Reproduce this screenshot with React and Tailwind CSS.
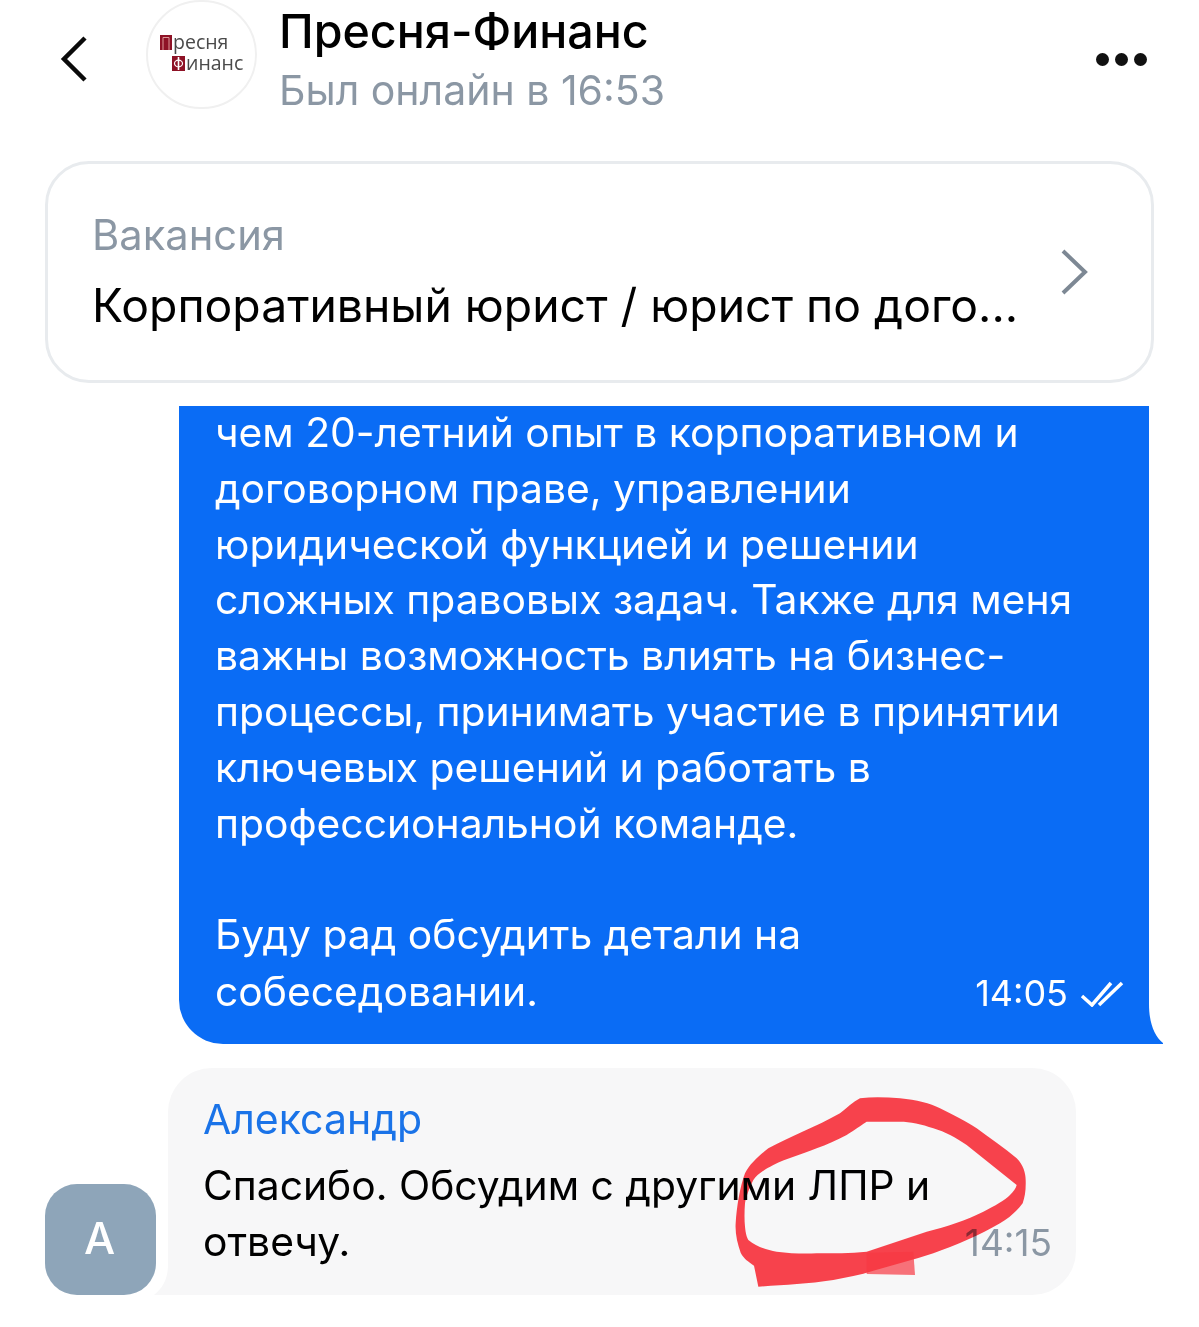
const font = { fontFamily: 'Inter, "Noto Sans", sans-serif' };

const blueLines = [
	'чем 20-летний опыт в корпоративном и',
	'договорном праве, управлении',
	'юридической функцией и решении',
	'сложных правовых задач. Также для меня',
	'важны возможность влиять на бизнес-',
	'процессы, принимать участие в принятии',
	'ключевых решений и работать в',
	'профессиональной команде.',
	'\u00a0',
	'Буду рад обсудить детали на',
];

// marker ring traced from the screenshot, in 3x crop coordinates
const ringOuter = 'M480 55 C520 50 560 52 600 55 C650 60 690 70 720 85 C760 105 800 125 830 145 C870 175 915 205 950 235 C970 255 977 280 977 300 C978 330 975 350 968 370 C950 395 925 415 900 430 C840 465 770 495 700 520 C640 540 580 555 520 572 C480 585 440 592 400 600 C320 612 250 615 175 620 L162 557 C145 545 130 535 122 518 C112 490 105 460 107 430 C110 380 120 320 135 280 C150 250 180 225 205 205 C270 170 350 140 420 100 C440 85 460 65 480 55 Z';
const ringInner = 'M500 125 C470 145 455 155 440 165 C410 180 380 195 350 205 C310 222 260 235 220 255 C190 270 170 285 160 300 C148 325 138 350 135 370 C133 395 133 420 135 440 C137 460 140 470 145 480 C170 500 200 510 230 515 C270 520 310 522 350 520 C400 520 450 520 500 515 C560 495 620 475 680 455 C740 440 800 420 850 395 C885 378 915 360 930 345 C940 335 948 325 950 315 C900 275 850 235 800 195 C770 175 735 155 700 145 C665 132 630 125 600 125 Z';

function BackIcon() {
	return (
		<svg width="30" height="48" viewBox="0 0 30 48" fill="none" stroke="#0a0a0a" strokeWidth="4.5">
			<path d="M25 3 L4 24 L25 45" />
		</svg>
	);
}

function Logo() {
	return (
		<div className="w-[111px] h-[109px] shrink-0 rounded-full border-2 border-[#f0f0f0] bg-white flex flex-col justify-center pl-[12px] pb-[4px] text-[#4a4a4a] text-[19.5px] leading-[20px] font-['Open_Sans',sans-serif]">
			<div className="flex items-center">
				<svg className="mr-px" width="12" height="15" viewBox="0 0 12 15">
					<rect width="12" height="15" fill="#8e1226" />
					<path d="M3 15 V2.5 H9 V15" fill="none" stroke="#d99" strokeWidth="1" />
				</svg>
				<span>ресня</span>
			</div>
			<div className="flex items-center pl-[12px] mt-[1px]">
				<svg className="mr-px" width="13" height="15" viewBox="0 0 13 15">
					<rect width="13" height="15" fill="#8e1226" />
					<ellipse cx="6.5" cy="7.5" rx="4" ry="3.4" fill="none" stroke="#fff" strokeWidth="1.2" />
					<path d="M6.5 1 V14" stroke="#fff" strokeWidth="1.6" />
				</svg>
				<span>инанс</span>
			</div>
		</div>
	);
}

export default function App() {
	return (
		<div className="w-[1199px] h-[1327px] bg-white overflow-hidden flex flex-col" style={font}>
			{/* Header */}
			<header className="h-[161px] shrink-0 flex items-start">
				<div className="w-[146px] pl-[60px] pt-[35px]"><BackIcon /></div>
				<Logo />
				<div className="ml-[22px] flex-1">
					<div className="text-[46.6px] leading-[62px] font-medium text-black">Пресня-Финанс</div>
					<div className="text-[41px] leading-[54px] text-[#8b97a4] mt-[1px]">Был онлайн в 16:53</div>
				</div>
				<div className="flex gap-[6px] pt-[53px] pr-[52px]">
					<span className="w-[13px] h-[13px] rounded-full bg-[#111]" />
					<span className="w-[13px] h-[13px] rounded-full bg-[#111]" />
					<span className="w-[13px] h-[13px] rounded-full bg-[#111]" />
				</div>
			</header>

			{/* Vacancy card */}
			<div className="mx-[45px] h-[222px] shrink-0 rounded-[44px] border-[3px] border-[#e8ebee] flex items-center pl-[44px] pr-[62px]">
				<div className="flex-1">
					<div className="text-[41.7px] leading-[54px] text-[#8b97a4] -mt-[1px]">Вакансия</div>
					<div className="text-[46.3px] leading-[60px] mt-[13px] text-black whitespace-nowrap">Корпоративный юрист / юрист по дого...</div>
				</div>
				<svg width="30" height="48" viewBox="0 0 30 48" fill="none" stroke="#7d8894" strokeWidth="4">
					<path d="M4 3 L26 24 L4 45" />
				</svg>
			</div>

			{/* Outgoing message */}
			<div className="relative ml-[179px] w-[970px] h-[638px] mt-[23px] shrink-0 bg-[#0a6cf5] rounded-bl-[44px] pl-[36px] text-white text-[40.8px] leading-[55.8px]">
				<div className="-mt-px">
					{blueLines.map((line, i) => (
						<div key={i} className="whitespace-nowrap">{line}</div>
					))}
					<div className="flex items-center justify-between pr-[25px]">
						<span>собеседовании.</span>
						<span className="flex items-center gap-[12px] text-[36px] pt-[3px]">
							14:05
							<svg width="44" height="26" viewBox="0 0 44 26" fill="none" stroke="white" strokeWidth="3.5">
								<path d="M2 15 L12 24 L31 2" />
								<path d="M19 24 L42 2" />
							</svg>
						</span>
					</div>
				</div>
				<svg className="absolute right-[-14px] bottom-0" width="14" height="40" viewBox="0 0 14 40">
					<path d="M0 0 C0 18 5 32 14 39 L14 40 L0 40 Z" fill="#0a6cf5" />
				</svg>
			</div>

			{/* Incoming message */}
			<div className="flex items-end mt-[24px] ml-[45px]">
				<div className="w-[111px] h-[111px] rounded-[32px] bg-[#8ea5b9] flex items-center justify-center text-white text-[44px] font-medium pb-[3px] pr-[2px]">А</div>
				<div className="relative ml-[12px] w-[908px] h-[227px] bg-[#f7f7f8] rounded-[44px] rounded-bl-none pl-[35px] pt-[23px]">
					<svg className="absolute left-[-14px] bottom-0" width="14" height="30" viewBox="0 0 14 30">
						<path d="M14 0 C14 12 10 22 0 30 L14 30 Z" fill="#f7f7f8" />
					</svg>
					<div className="text-[41px] leading-[56px] text-[#1a73e8]">Александр</div>
					<div className="text-[40.8px] leading-[56px] mt-[10px] text-black whitespace-nowrap">Спасибо. Обсудим с другими ЛПР и</div>
					<div className="flex justify-between pr-[24px]">
						<span className="text-[40.8px] leading-[56px] text-black">отвечу.</span>
						<span className="text-[37px] leading-[56px] text-[#8b97a4] pt-[2px]">14:15</span>
					</div>
					{/* Red marker scribble */}
					<svg className="absolute left-[532px] top-[12px] mix-blend-multiply" width="400" height="230" viewBox="0 0 1200 690">
						<path d={`${ringOuter} ${ringInner}`} fill="#ff3a44" fillRule="evenodd" opacity="0.95" />
						<path d="M500 518 L640 515 L645 585 L500 582 Z" fill="#ff3a44" opacity="0.7" />
					</svg>
				</div>
			</div>
		</div>
	);
}
